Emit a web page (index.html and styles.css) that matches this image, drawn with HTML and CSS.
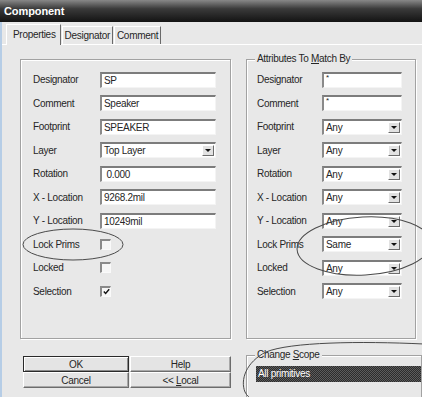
FILE: index.html
```html
<!DOCTYPE html>
<html lang="en">
<head>
    <meta charset="UTF-8">
    <title>Component</title>
    <link rel="stylesheet" href="styles.css">
</head>
<body>
    <div class="dialog">
        <div class="titlebar">Component</div>
        <div class="body">
            <div class="tabs">
                <span class="tab active">Properties</span>
                <span class="tab">Designator</span>
                <span class="tab">Comment</span>
            </div>

            <div class="panel">
                <div class="groups">
                    <div class="group props">
                        <div class="rows">
                            <span class="label">Designator</span>
                            <div class="field">SP</div>
                            <span class="label">Comment</span>
                            <div class="field">Speaker</div>
                            <span class="label">Footprint</span>
                            <div class="field">SPEAKER</div>
                            <span class="label">Layer</span>
                            <div class="field select">Top Layer<span class="drop"></span></div>
                            <span class="label">Rotation</span>
                            <div class="field">&nbsp;0.000</div>
                            <span class="label">X - Location</span>
                            <div class="field">9268.2mil</div>
                            <span class="label">Y - Location</span>
                            <div class="field">10249mil</div>
                            <span class="label">Lock Prims</span>
                            <div><span class="check"></span></div>
                            <span class="label">Locked</span>
                            <div><span class="check"></span></div>
                            <span class="label">Selection</span>
                            <div>
                                <span class="check">
                                    <svg width="7" height="7" viewBox="0 0 7 7"><path d="M0.8 3.6 L2.6 5.4 L6.2 1.2" fill="none" stroke="#111" stroke-width="1.4"/></svg>
                                </span>
                            </div>
                        </div>
                    </div>

                    <div class="group match">
                        <span class="legend">Attributes To <u>M</u>atch By</span>
                        <div class="rows">
                            <span class="label">Designator</span>
                            <div class="field"><span class="star">*</span></div>
                            <span class="label">Comment</span>
                            <div class="field"><span class="star">*</span></div>
                            <span class="label">Footprint</span>
                            <div class="field select">Any<span class="drop"></span></div>
                            <span class="label">Layer</span>
                            <div class="field select">Any<span class="drop"></span></div>
                            <span class="label">Rotation</span>
                            <div class="field select">Any<span class="drop"></span></div>
                            <span class="label">X - Location</span>
                            <div class="field select">Any<span class="drop"></span></div>
                            <span class="label">Y - Location</span>
                            <div class="field select">Any<span class="drop"></span></div>
                            <span class="label">Lock Prims</span>
                            <div class="field select">Same<span class="drop"></span></div>
                            <span class="label">Locked</span>
                            <div class="field select">Any<span class="drop"></span></div>
                            <span class="label">Selection</span>
                            <div class="field select">Any<span class="drop"></span></div>
                        </div>
                    </div>
                </div>

                <div class="bottom">
                    <div class="buttons">
                        <button class="btn default">OK</button>
                        <button class="btn">Help</button>
                        <button class="btn">Cancel</button>
                        <button class="btn">&lt;&lt; <u>L</u>ocal</button>
                    </div>
                    <div class="group scope">
                        <span class="legend">Change <u>S</u>cope</span>
                        <div class="list"><span>All primitives</span></div>
                    </div>
                </div>
            </div>
        </div>

        <!-- hand-drawn annotation rings -->
        <svg class="marks" width="422" height="397" viewBox="0 0 422 397">
            <ellipse cx="73" cy="244.5" rx="50" ry="15.5"/>
            <ellipse cx="364" cy="246" rx="67" ry="29" transform="rotate(-3 364 246)"/>
            <path d="M424 344 C 360 341, 290 342, 266 352 C 246 362, 240 380, 245 392 C 247 396, 250 398, 252 400"/>
        </svg>
    </div>
</body>
</html>
```

FILE: styles.css
```css
* {
    box-sizing: border-box;
}
body {
    margin: 0;
    background: #e8e8e8;
    font-family: "Liberation Sans", Arial, sans-serif;
    font-size: 10px;
    letter-spacing: -0.3px;
    color: #262626;
}
.dialog {
    position: relative;
    width: 422px;
    height: 397px;
    overflow: hidden;
    background: #e8e8e8;
}
.titlebar {
    height: 22px;
    padding-left: 4px;
    line-height: 22px;
    font-size: 11px;
    font-weight: bold;
    letter-spacing: -0.1px;
    color: #fff;
    background: linear-gradient(#888, #3a3a3a 40%, #131313);
}
.body {
    height: 375px;
    border-left: 2px solid #b6cde6;
}
.tabs {
    display: flex;
    align-items: flex-end;
    height: 22px;
    padding-left: 4px;
}
.tab {
    height: 18px;
    padding: 0 2px;
    line-height: 17px;
    border-left: 1px solid #fff;
    border-top: 1px solid #fff;
    border-right: 1px solid #6a6a6a;
    margin-right: 1px;
}
.tab.active {
    position: relative;
    z-index: 1;
    height: 21px;
    margin-bottom: -1px;
    padding: 0 4px 0 6px;
    line-height: 19px;
    background: #e8e8e8;
}
.panel {
    height: 353px;
    padding: 14px 0 0 18px;
    border-top: 1px solid #fff;
}
.groups {
    display: flex;
    gap: 15px;
}
.group {
    position: relative;
    height: 280px;
    border: 1px solid #a2a2a2;
    box-shadow: inset 1px 1px #fff, 1px 1px #fff;
}
.props {
    width: 211px;
}
.match {
    width: 170px;
}
.legend {
    position: absolute;
    top: -7px;
    left: 8px;
    padding: 0 2px;
    line-height: 12px;
    background: #e8e8e8;
}
.rows {
    display: grid;
    grid-auto-rows: 23.5px;
    align-items: center;
    padding-top: 8px;
}
.props .rows {
    grid-template-columns: 67px 116px;
    padding-left: 12px;
}
.match .rows {
    grid-template-columns: 65px 80px;
    padding-left: 10px;
}
.label {
    white-space: nowrap;
}
.field {
    display: flex;
    align-items: center;
    height: 16px;
    padding-left: 2px;
    background: #fff;
    border-style: solid;
    border-width: 2px 1px 1px 2px;
    border-color: #7c7c7c #f4f4f4 #f4f4f4 #8a8a8a;
    white-space: nowrap;
}
.star {
    align-self: flex-start;
    font-size: 8px;
    line-height: 8px;
}
.drop {
    display: flex;
    align-items: center;
    justify-content: center;
    width: 12px;
    height: 11px;
    margin-left: auto;
    margin-right: 1px;
    background: #e2e2e2;
    border: 1px solid;
    border-color: #fff #6c6c6c #6c6c6c #fff;
}
.drop::after {
    content: "";
    border-left: 3px solid transparent;
    border-right: 3px solid transparent;
    border-top: 3px solid #111;
}
.check {
    display: flex;
    align-items: center;
    justify-content: center;
    width: 11px;
    height: 11px;
    background: #f6f6f6;
    border-style: solid;
    border-width: 2px 1px 1px 2px;
    border-color: #8a8a8a #fafafa #fafafa #8a8a8a;
}
.bottom {
    display: flex;
    align-items: flex-start;
    gap: 15px;
    margin-top: 17px;
    padding-left: 3px;
}
.buttons {
    display: grid;
    grid-template-columns: 106px 101px;
    grid-template-rows: 16px 16px;
    column-gap: 1px;
}
.btn {
    padding: 0;
    font: inherit;
    letter-spacing: inherit;
    color: #262626;
    background: #e4e4e4;
    border: 1px solid;
    border-color: #fff #6c6c6c #6c6c6c #fff;
    box-shadow: inset -1px -1px #a8a8a8;
}
.btn.default {
    border-color: #2a2a2a;
    box-shadow: inset 1px 1px #fff, inset -1px -1px #8a8a8a;
}
.scope {
    width: 200px;
    height: 60px;
    margin-top: -1px;
    padding: 10px 0 0 9px;
}
.list {
    height: 16px;
    padding-left: 2px;
    line-height: 16px;
    color: #fff;
    background: repeating-conic-gradient(#2c2c2c 0 25%, #5c5c5c 0 50%) 0 0 / 2px 2px;
}
.marks {
    position: absolute;
    left: 0;
    top: 0;
    fill: none;
    stroke: #4a4a4a;
    stroke-width: 1;
}
```
